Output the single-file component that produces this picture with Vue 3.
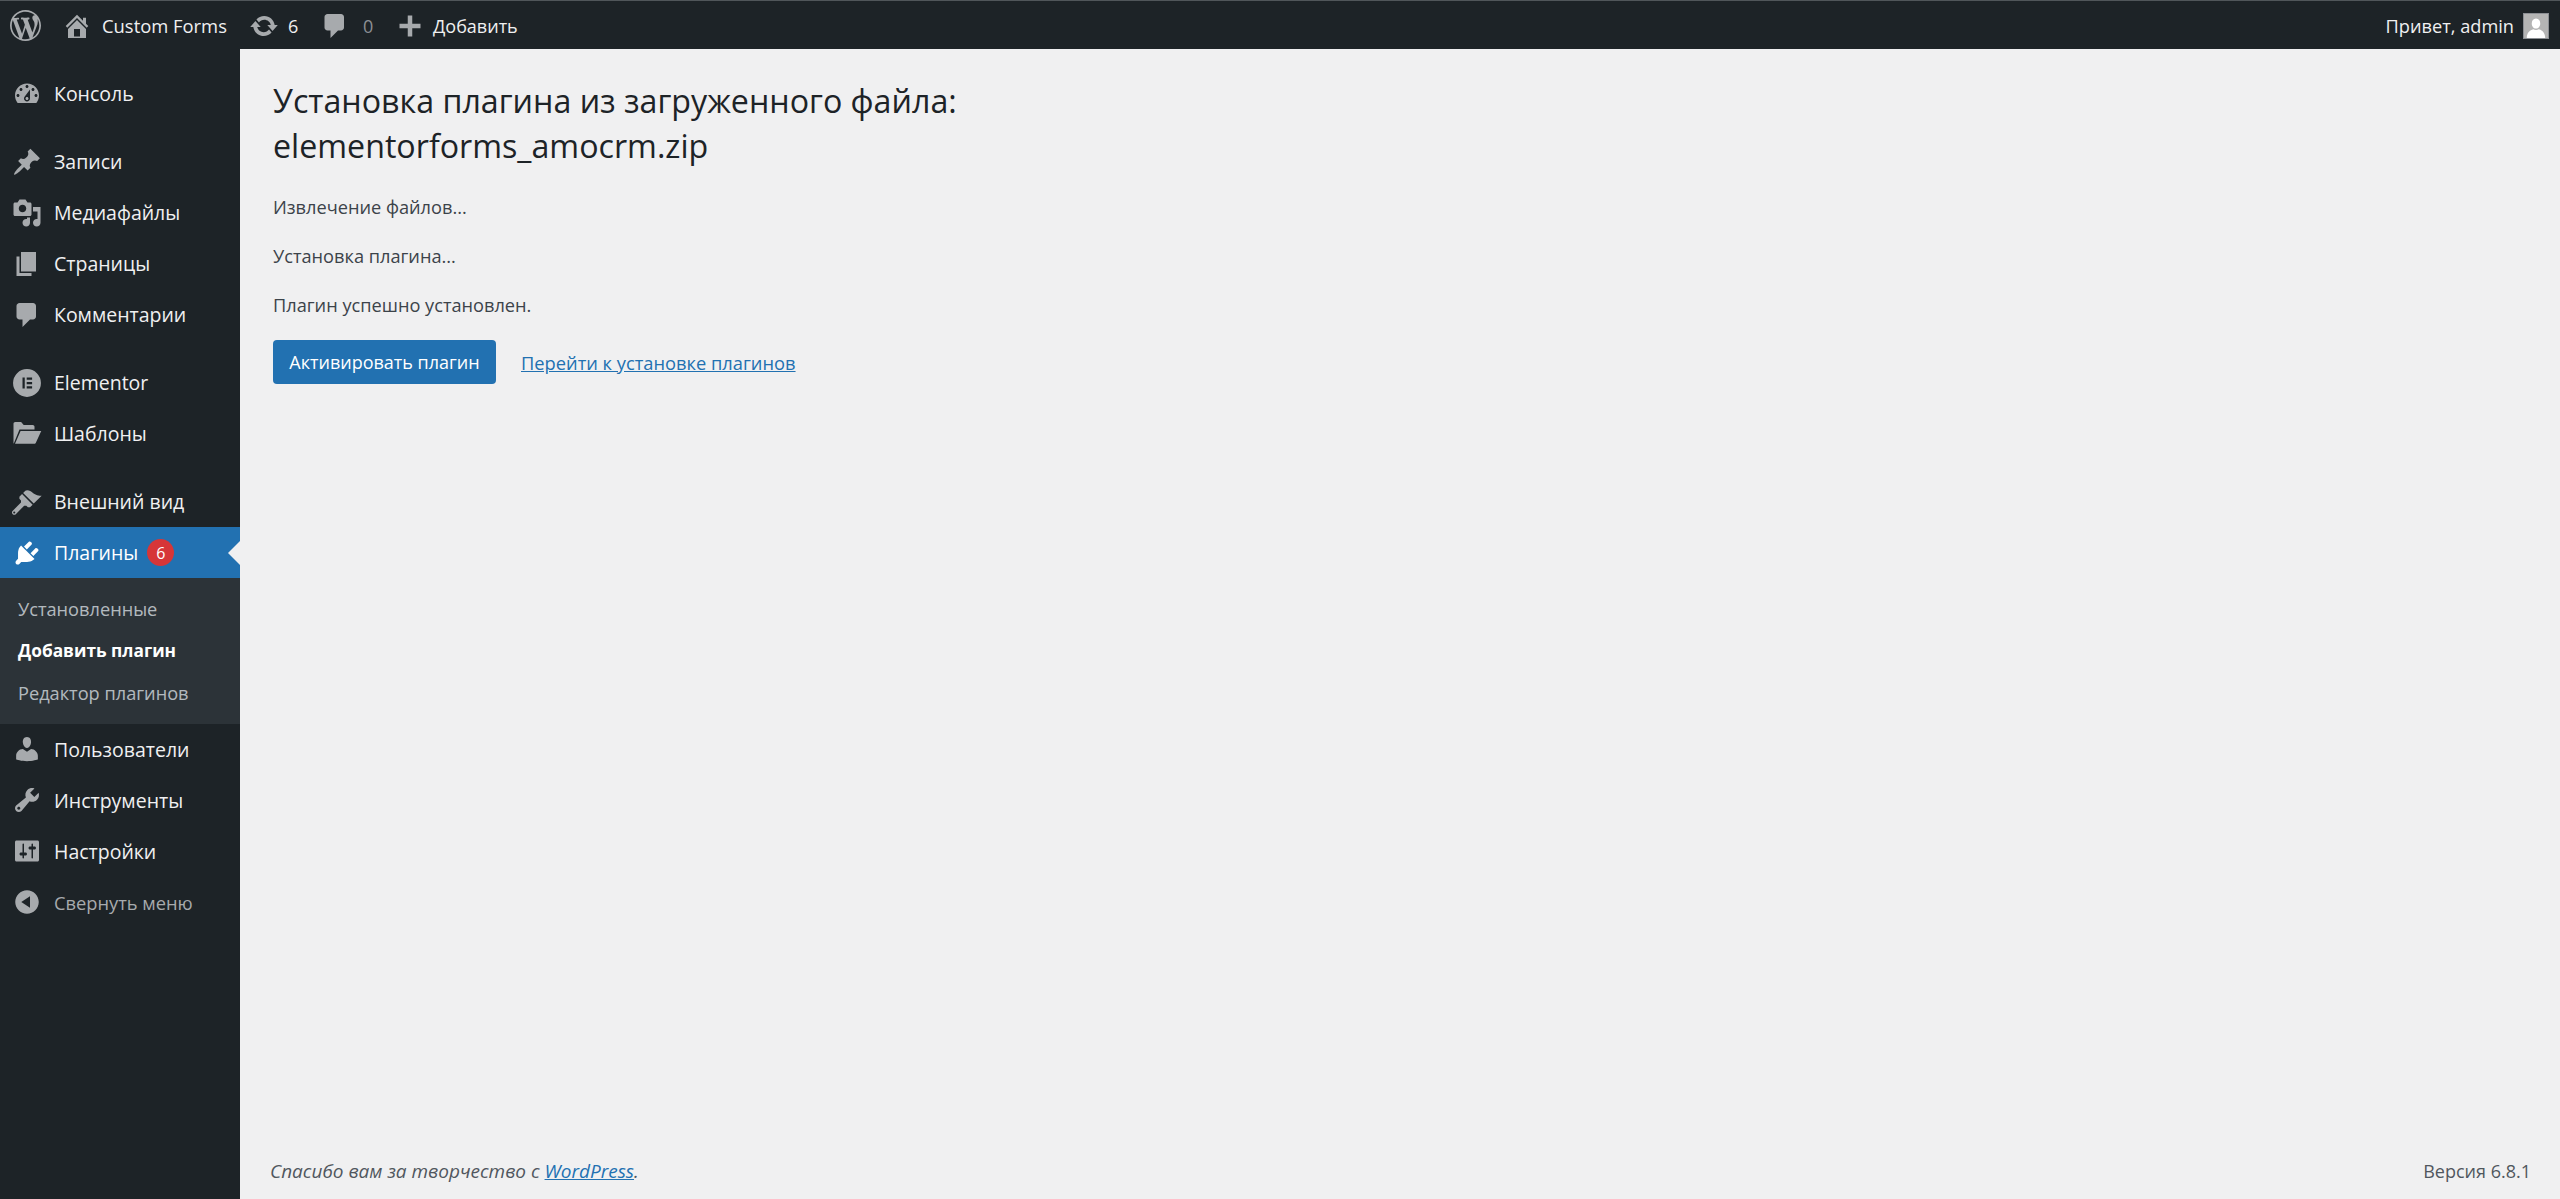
<script setup>
const icons = {
  wp: 'M20 10c0-5.51-4.49-10-10-10C4.48 0 0 4.49 0 10c0 5.52 4.48 10 10 10 5.51 0 10-4.48 10-10zM7.78 15.37L4.37 6.22c.55-.02 1.17-.08 1.17-.08.5-.06.44-1.13-.06-1.11 0 0-1.45.11-2.37.11-.18 0-.37 0-.58-.01C4.12 2.69 6.87 1.11 10 1.11c2.33 0 4.45.87 6.05 2.34-.68-.11-1.65.39-1.65 1.58 0 .74.45 1.36.9 2.1.35.61.55 1.36.55 2.46 0 1.49-1.4 5-1.4 5l-3.03-8.37c.54-.02.82-.17.82-.17.5-.05.44-1.25-.06-1.22 0 0-1.44.12-2.38.12-.87 0-2.33-.12-2.33-.12-.5-.03-.56 1.2-.06 1.22l.92.08 1.26 3.41zM17.41 10c.24-.64.74-1.87.43-4.25.7 1.29 1.05 2.71 1.05 4.25 0 3.29-1.73 6.24-4.4 7.78.97-2.59 1.94-5.2 2.92-7.78zM6.1 18.09C3.12 16.65 1.11 13.53 1.11 10c0-1.3.23-2.48.72-3.59C3.25 10.3 4.67 14.2 6.1 18.09zm4.03-6.63l2.58 6.98c-.86.29-1.76.45-2.71.45-.79 0-1.57-.11-2.29-.33.81-2.38 1.62-4.74 2.42-7.1z',
  home: 'M16 8.5l1.53 1.53-1.06 1.06L10 4.62l-6.47 6.47-1.06-1.06L10 2.5l4 4v-2h2v4zm-6-2.46l6 5.99V18H4v-5.97zM12 17v-5H8v5h4z',
  update: 'M10.2 3.28c3.53 0 6.43 2.61 6.92 6h2.08l-3.5 4-3.5-4h2.32c-.45-1.97-2.21-3.45-4.32-3.45-1.45 0-2.73.71-3.54 1.78L4.95 5.66C6.23 4.2 8.11 3.28 10.2 3.28zm-.4 13.44c-3.52 0-6.43-2.61-6.92-6H.8l3.5-4c1.17 1.33 2.33 2.67 3.5 4H5.48c.45 1.97 2.21 3.45 4.32 3.45 1.45 0 2.73-.71 3.54-1.78l1.71 1.95c-1.28 1.46-3.15 2.38-5.25 2.38z',
  comment: 'M5 2h9c1.1 0 2 .9 2 2v7c0 1.1-.9 2-2 2h-2l-5 5v-5H5c-1.1 0-2-.9-2-2V4c0-1.1.9-2 2-2z',
  plus: 'M17 8.500v3h-5.500V17h-3v-5.500H3v-3h5.500V3h3v5.500z',
  dashboard: 'M3.76 16h12.48c1.1-1.37 1.76-3.11 1.76-5 0-4.42-3.58-8-8-8s-8 3.58-8 8c0 1.89.66 3.63 1.76 5zM10 4c.55 0 1 .45 1 1s-.45 1-1 1-1-.45-1-1 .45-1 1-1zM6 6c.55 0 1 .45 1 1s-.45 1-1 1-1-.45-1-1 .45-1 1-1zm8 0c.55 0 1 .45 1 1s-.45 1-1 1-1-.45-1-1 .45-1 1-1zm-5.37 5.55L12 7v6c0 1.1-.9 2-2 2s-2-.9-2-2c0-.57.24-1.08.63-1.45zM4 10c.55 0 1 .45 1 1s-.45 1-1 1-1-.45-1-1 .45-1 1-1zm12 0c.55 0 1 .45 1 1s-.45 1-1 1-1-.45-1-1 .45-1 1-1zm-5 3c0-.55-.45-1-1-1s-1 .45-1 1 .45 1 1 1 1-.45 1-1z',
  post: 'M10.44 3.02l1.82-1.82 6.36 6.35-1.83 1.82c-1.05-.68-2.48-.57-3.41.36l-.75.75c-.92.93-1.04 2.35-.35 3.41l-1.83 1.82-2.41-2.41-2.8 2.79c-.42.42-3.38 2.71-3.8 2.29s1.86-3.39 2.28-3.81l2.79-2.79L4.1 9.36l1.83-1.82c1.05.69 2.48.57 3.4-.36l.75-.75c.93-.92 1.05-2.35.36-3.41z',
  media: 'M13 11V4c0-.55-.45-1-1-1h-1.67L9 1H5L3.67 3H2c-.55 0-1 .45-1 1v7c0 .55.45 1 1 1h10c.55 0 1-.45 1-1zM7 4.5c1.38 0 2.5 1.12 2.5 2.5S8.38 9.5 7 9.5 4.5 8.38 4.5 7 5.62 4.5 7 4.5zM14 6h5v10.5c0 1.38-1.12 2.5-2.5 2.5S14 17.88 14 16.5s1.12-2.5 2.5-2.5c.17 0 .34.02.5.05V9h-3V6zm-4 8.05V13h2v3.5c0 1.38-1.12 2.5-2.5 2.5S7 17.88 7 16.5 8.12 14 9.5 14c.17 0 .34.02.5.05z',
  page: 'M6 15V2h10v13H6zm-1 1h8v2H3V5h2v11z',
  elementor: 'M10 .7a9.300 9.300 0 1 0 0 18.600a9.300 9.300 0 0 0 0-18.600zM7 6.300h1.500v7.400H7zM9.800 6.300h3.600v1.500H9.800zM9.800 9.250h3.600v1.500H9.800zM9.800 12.200h3.600v1.500H9.800z',
  folder: 'M1 16.500V3.200C1 2.500 1.500 2 2.200 2h3.900l1.700 2h6c.7 0 1.200.5 1.200 1.200V7H5L1.400 15.800zM5.700 8H19.500l-3.600 7.800c-.2.4-.5.7-1 .7H2z',
  brush: 'M14.48 11.06L7.41 3.99l1.5-1.500c.5-.56 2.300-.47 3.510.32 1.210.8 1.430 1.280 2.910 2.100 1.180.64 2.450 1.260 4.450.85zM13.770 11.770L6.700 4.700 4.930 6.470v1.410l1.060 1.060v1.420L.39 15.960c-.56.56-.56 1.470 0 2.030l.1.1c.56.56 1.470.56 2.030 0l5.590-5.610h1.420l1.060 1.060H12zM1.500 16.300a.7.7 0 1 0 0 1.400a.7.7 0 0 0 0-1.400z',
  plugin: 'M13.11 4.36L9.87 7.6 8 5.73l3.24-3.24c.35-.34 1.05-.2 1.56.32.52.51.66 1.21.31 1.55zm-8 1.77l.91-1.12 9.01 9.01-1.19.84c-.71.71-2.63 1.16-3.82 1.16H6.14L4.9 17.26c-.59.59-1.54.59-2.12 0-.59-.58-.59-1.53 0-2.12l1.24-1.24v-3.88c0-1.13.4-3.19 1.09-3.89zm7.26 3.97l3.24-3.24c.34-.35 1.04-.21 1.55.31.52.51.66 1.21.31 1.55l-3.24 3.25z',
  users: 'M10 9.25c-2.27 0-2.73-3.44-2.73-3.44C7 4.02 7.82 2 9.97 2c2.16 0 2.98 2.02 2.71 3.81 0 0-.41 3.44-2.68 3.44zm0 2.57L12.72 10c2.39 0 4.52 2.33 4.52 4.53v2.49s-3.65 1.13-7.24 1.13c-3.65 0-7.24-1.13-7.24-1.13v-2.49c0-2.25 1.94-4.53 4.47-4.53z',
  tools: 'M16.68 9.77c-1.34 1.34-3.3 1.67-4.95.99l-5.41 6.52c-.99.99-2.59.99-3.58 0s-.99-2.59 0-3.57l6.52-5.42c-.68-1.65-.35-3.61.99-4.95 1.28-1.28 3.12-1.62 4.72-1.06l-2.89 2.89 2.82 2.82 2.86-2.87c.53 1.58.18 3.39-1.08 4.65zM3.81 16.21c.4.39 1.04.39 1.43 0 .4-.4.4-1.04 0-1.43-.39-.4-1.03-.4-1.43 0-.39.39-.39 1.03 0 1.43z',
  settings: 'M18 16V4c0-.55-.45-1-1-1H3c-.55 0-1 .45-1 1v12c0 .55.45 1 1 1h14c.55 0 1-.45 1-1zM8 11h1c.55 0 1 .45 1 1s-.45 1-1 1H8v1.5c0 .28-.22.5-.5.5s-.5-.22-.5-.5V13H6c-.55 0-1-.45-1-1s.45-1 1-1h1V5.5c0-.28.22-.5.5-.5s.5.22.5.5V11zm5-2h-1c-.55 0-1-.45-1-1s.45-1 1-1h1V5.5c0-.28.22-.5.5-.5s.5.22.5.5V7h1c.55 0 1 .45 1 1s-.45 1-1 1h-1v5.5c0 .28-.22.5-.5.5s-.5-.22-.5-.5V9z',
  collapse: 'M10 2.16c4.33 0 7.84 3.51 7.84 7.84s-3.51 7.84-7.84 7.84S2.16 14.33 2.16 10 5.71 2.16 10 2.16zm2 11.72V6.12L6.18 9.97z'
}

const groups = [
  [{ label: 'Консоль', icon: 'dashboard' }],
  [
    { label: 'Записи', icon: 'post' },
    { label: 'Медиафайлы', icon: 'media' },
    { label: 'Страницы', icon: 'page' },
    { label: 'Комментарии', icon: 'comment' }
  ],
  [
    { label: 'Elementor', icon: 'elementor' },
    { label: 'Шаблоны', icon: 'folder' }
  ],
  [
    { label: 'Внешний вид', icon: 'brush' },
    { label: 'Плагины', icon: 'plugin', active: true, badge: 6, sub: [
      { label: 'Установленные' },
      { label: 'Добавить плагин', current: true },
      { label: 'Редактор плагинов' }
    ] },
    { label: 'Пользователи', icon: 'users' },
    { label: 'Инструменты', icon: 'tools' },
    { label: 'Настройки', icon: 'settings' },
    { label: 'Свернуть меню', icon: 'collapse', muted: true }
  ]
]

const steps = ['Извлечение файлов...', 'Установка плагина...', 'Плагин успешно установлен.']
</script>

<template>
  <div class="wp">
    <header class="bar">
      <div class="bar-left">
        <a class="bar-item logo"><svg viewBox="0 0 20 20" class="logo-icon"><path :d="icons.wp" /></svg></a>
        <a class="bar-item site"><svg viewBox="0 0 20 20" class="bar-icon"><path :d="icons.home" /></svg><span>Custom Forms</span></a>
        <a class="bar-item updates"><svg viewBox="0 0 20 20" class="bar-icon"><path :d="icons.update" /></svg><span>6</span></a>
        <a class="bar-item comments"><svg viewBox="0 0 20 20" class="bar-icon"><path :d="icons.comment" /></svg><span class="zero">0</span></a>
        <a class="bar-item add"><svg viewBox="0 0 20 20" class="bar-icon"><path :d="icons.plus" /></svg><span>Добавить</span></a>
      </div>
      <a class="bar-item account">
        <span>Привет, admin</span>
        <span class="avatar">
          <svg viewBox="0 0 26 26"><rect width="26" height="26" fill="#b4b4b4" /><path fill="#fff" d="M13 5c3 0 4.600 2.400 4.600 5.200 0 3-1.800 5.600-4.600 5.600s-4.600-2.600-4.600-5.600C8.400 7.400 10 5 13 5zM3 26c0-6 3.500-8.500 7-9.500 1.800 1 4.200 1 6 0 3.500 1 7 3.500 7 9.500z" /></svg>
        </span>
      </a>
    </header>

    <div class="body">
      <aside class="side">
        <nav class="menu">
          <ul v-for="(group, g) in groups" :key="g" class="group">
            <li v-for="item in group" :key="item.label">
              <a class="item" :class="{ active: item.active, muted: item.muted }">
                <span class="item-icon"><svg viewBox="0 0 20 20"><path fill-rule="evenodd" :d="icons[item.icon]" /></svg></span>
                <span class="item-label">{{ item.label }}</span>
                <span v-if="item.badge" class="badge">{{ item.badge }}</span>
              </a>
              <ul v-if="item.sub" class="sub">
                <li v-for="s in item.sub" :key="s.label" class="sub-item" :class="{ current: s.current }">{{ s.label }}</li>
              </ul>
            </li>
          </ul>
        </nav>
      </aside>

      <main class="main">
        <div class="content">
          <h1 class="title">Установка плагина из загруженного файла:<br />elementorforms_amocrm.zip</h1>
          <p v-for="s in steps" :key="s" class="step">{{ s }}</p>
          <div class="actions">
            <a class="btn">Активировать плагин</a>
            <a class="link">Перейти к установке плагинов</a>
          </div>
        </div>
        <footer class="foot">
          <em class="thanks">Спасибо вам за творчество с <a class="link">WordPress</a>.</em>
          <span class="version">Версия 6.8.1</span>
        </footer>
      </main>
    </div>
  </div>
</template>

<style scoped>
.wp {
  min-height: 100vh;
  display: flex;
  flex-direction: column;
  background: #f0f0f1;
  font-family: "Open Sans", "Noto Sans", sans-serif;
  font-size: 18px;
  color: #3c434a;
}
.bar {
  height: 48px;
  flex: none;
  border-top: 1px solid #50565a;
  background: #1d2327;
  display: flex;
  align-items: center;
  justify-content: space-between;
  color: #f0f0f1;
  font-size: 18px;
}
.bar-left { display: flex; align-items: center; height: 100%; }
.bar-item { display: flex; align-items: center; height: 100%; box-sizing: border-box; padding-top: 1px; }
.bar-icon { width: 30px; height: 30px; fill: #a7aaad; display: block; }
.logo { padding-left: 10px; width: 62px; padding-top: 0; }
.logo-icon { width: 31px; height: 31px; fill: #a7aaad; display: block; }
.site { gap: 10px; width: 187px; font-size: 18.4px; }
.updates { gap: 9px; width: 71px; }
.comments { gap: 13px; width: 75px; }
.add { gap: 8px; }
.zero { color: #8c8f94; }
.account { gap: 9px; padding-right: 11px; font-size: 18.2px; }
.avatar { width: 26px; height: 26px; box-sizing: border-box; border: 1px solid #8c8f94; display: block; }
.avatar svg { display: block; width: 100%; height: 100%; }

.body { flex: 1; display: flex; min-height: 0; }
.side { width: 240px; flex: none; background: #1d2327; padding-top: 19px; box-sizing: border-box; }
.menu { display: flex; flex-direction: column; gap: 17px; }
.group { list-style: none; margin: 0; padding: 0; }
.item {
  position: relative;
  display: flex;
  align-items: center;
  height: 51px;
  color: #f0f0f1;
  font-size: 19.5px;
}
.item-icon { width: 54px; flex: none; display: flex; justify-content: center; }
.item-icon svg { width: 30px; height: 30px; fill: #a7aaad; display: block; }
.item.active { background: #2271b1; color: #fff; }
.item.active .item-icon svg { fill: #fff; }
.item.active::after {
  content: "";
  position: absolute;
  right: 0;
  top: 50%;
  margin-top: -12px;
  border: 12px solid transparent;
  border-right-color: #f0f0f1;
  border-left-width: 0;
}
.item.muted { color: #a7aaad; font-size: 18.3px; }
.badge {
  width: 27px;
  height: 27px;
  margin-left: 9px;
  border-radius: 50%;
  background: #d63638;
  color: #fff;
  font-size: 16px;
  display: flex;
  align-items: center;
  justify-content: center;
}
.sub {
  list-style: none;
  margin: 0;
  padding: 10px 0 9.5px;
  background: #2c3338;
}
.sub-item {
  height: 42px;
  line-height: 42px;
  padding-left: 18px;
  font-size: 18.2px;
  color: rgba(240, 246, 252, 0.7);
}
.sub-item.current { color: #fff; font-weight: 700; font-size: 17.3px; }

.main { flex: 1; display: flex; flex-direction: column; min-width: 0; }
.content { flex: 1; padding: 30px 33px 0; }
.title {
  margin: 0 0 25px;
  font-weight: 400;
  font-size: 32.2px;
  line-height: 44.5px;
  color: #1d2327;
}
.step { margin: 0 0 21px; line-height: 28px; font-size: 18.2px; }
.actions { display: flex; align-items: center; gap: 25px; margin-top: 20px; }
.btn {
  height: 44px;
  width: 223px;
  display: flex;
  align-items: center;
  justify-content: center;
  background: #2271b1;
  border-radius: 4px;
  color: #fff;
  font-size: 18px;
}
.link { color: #2271b1; text-decoration: underline; font-size: 18.3px; }
.foot {
  display: flex;
  justify-content: space-between;
  align-items: center;
  padding: 0 29px 8px 30px;
  height: 40px;
  color: #50575e;
  font-size: 18px;
}
.thanks { font-style: italic; font-size: 19px; }
.thanks .link { font-size: 19px; }
</style>
